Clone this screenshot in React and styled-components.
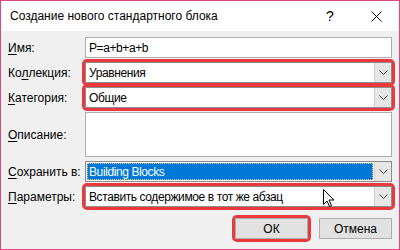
import React from "react";
import styled, { createGlobalStyle } from "styled-components";

const GlobalStyle = createGlobalStyle`
  html, body {
    margin: 0;
    padding: 0;
    background: #fff;
  }
`;

const Window = styled.div`
  position: relative;
  width: 400px;
  height: 250px;
  box-sizing: border-box;
  border: 1px solid #e4457e;
  background: #f0f0f0;
  font-family: "Liberation Sans", Arial, sans-serif;
  font-size: 12px;
  color: #000;
  display: flex;
  flex-direction: column;
`;

const TitleBar = styled.div`
  height: 30px;
  background: #fff;
  display: flex;
  align-items: center;
  padding-left: 9px;

  .title {
    flex: 1;
    font-size: 12px;
  }

  .help {
    width: 46px;
    text-align: center;
    font-size: 14px;
  }

  .close {
    width: 46px;
    display: flex;
    justify-content: center;
  }
`;

const Body = styled.div`
  padding: 6px 7px 0 7px;
  display: flex;
  flex-direction: column;
`;

const Form = styled.div`
  display: grid;
  grid-template-columns: 77px 1fr;
  row-gap: 4px;
  align-items: center;
`;

const Label = styled.div`
  white-space: nowrap;

  u {
    text-decoration: underline;
    text-underline-offset: 2px;
  }
`;

const Highlight = styled.div`
  border: 3px solid #e8393f;
  border-radius: 5px;
  margin: -3px;
`;

const Field = styled.div`
  height: ${p => p.$h || 21}px;
  box-sizing: border-box;
  border: 1px solid ${p => (p.$combo ? "#8c8c8c" : "#adadad")};
  background: #fff;
  display: flex;
  align-items: stretch;
`;

const Value = styled.div`
  flex: 1;
  display: flex;
  align-items: center;
  padding-left: 3px;
  letter-spacing: -0.4px;
  white-space: nowrap;
  overflow: hidden;
`;

const Selected = styled.div`
  flex: 1;
  display: flex;
  align-items: center;
  margin: 1px;
  padding-left: 2px;
  letter-spacing: -0.4px;
  background: #0078d7;
  color: #fff;
  outline: 1px dotted #f2c680;
  outline-offset: -1px;
`;

const DropButton = styled.div`
  width: 16px;
  background: #e6e6e6;
  border-left: 1px solid #cfcfcf;
  display: flex;
  align-items: center;
  justify-content: center;
`;

const Buttons = styled.div`
  display: flex;
  justify-content: flex-end;
  gap: 11px;
  margin-top: 11px;
`;

const Button = styled.div`
  width: 73px;
  height: 21px;
  box-sizing: border-box;
  border: 1px solid #adadad;
  background: #e1e1e1;
  display: flex;
  align-items: center;
  justify-content: center;
`;

const Cursor = styled.svg`
  position: absolute;
  left: 322px;
  top: 188px;
`;

const Chevron = () => (
  <svg width="9" height="6" viewBox="0 0 9 6">
    <path d="M0.5 0.5 L4.5 4.5 L8.5 0.5" fill="none" stroke="#444" strokeWidth="1" />
  </svg>
);

const Combo = ({ children, selected }) => (
  <Field $combo>
    {selected ? <Selected>{children}</Selected> : <Value>{children}</Value>}
    <DropButton>
      <Chevron />
    </DropButton>
  </Field>
);

const App = () => {
  return (
    <>
      <GlobalStyle />
      <Window>
        <TitleBar>
          <div className="title">Создание нового стандартного блока</div>
          <div className="help">?</div>
          <div className="close">
            <svg width="11" height="11" viewBox="0 0 11 11">
              <path d="M0.5 0.5 L10.5 10.5 M10.5 0.5 L0.5 10.5" stroke="#000" strokeWidth="1" />
            </svg>
          </div>
        </TitleBar>
        <Body>
          <Form>
            <Label>
              <u>И</u>мя:
            </Label>
            <Field>
              <Value>P=a+b+a+b</Value>
            </Field>

            <Label>
              Ко<u>л</u>лекция:
            </Label>
            <Highlight>
              <Combo>Уравнения</Combo>
            </Highlight>

            <Label>
              <u>К</u>атегория:
            </Label>
            <Highlight>
              <Combo>Общие</Combo>
            </Highlight>

            <Label>
              <u>О</u>писание:
            </Label>
            <Field $h={45} />

            <Label>
              <u>С</u>охранить в:
            </Label>
            <Combo selected>Building Blocks</Combo>

            <Label>
              <u>П</u>араметры:
            </Label>
            <Highlight>
              <Combo>Вставить содержимое в тот же абзац</Combo>
            </Highlight>
          </Form>
          <Buttons>
            <Highlight>
              <Button>ОК</Button>
            </Highlight>
            <Button>Отмена</Button>
          </Buttons>
        </Body>
        <Cursor width="12" height="19" viewBox="0 0 12 19">
          <path
            d="M0.5 0.5 L0.5 15.5 L4 12 L6.5 17.5 L8.5 16.5 L6 11 L11 11 Z"
            fill="#fff"
            stroke="#000"
            strokeWidth="1"
          />
        </Cursor>
      </Window>
    </>
  );
};

export default App;
